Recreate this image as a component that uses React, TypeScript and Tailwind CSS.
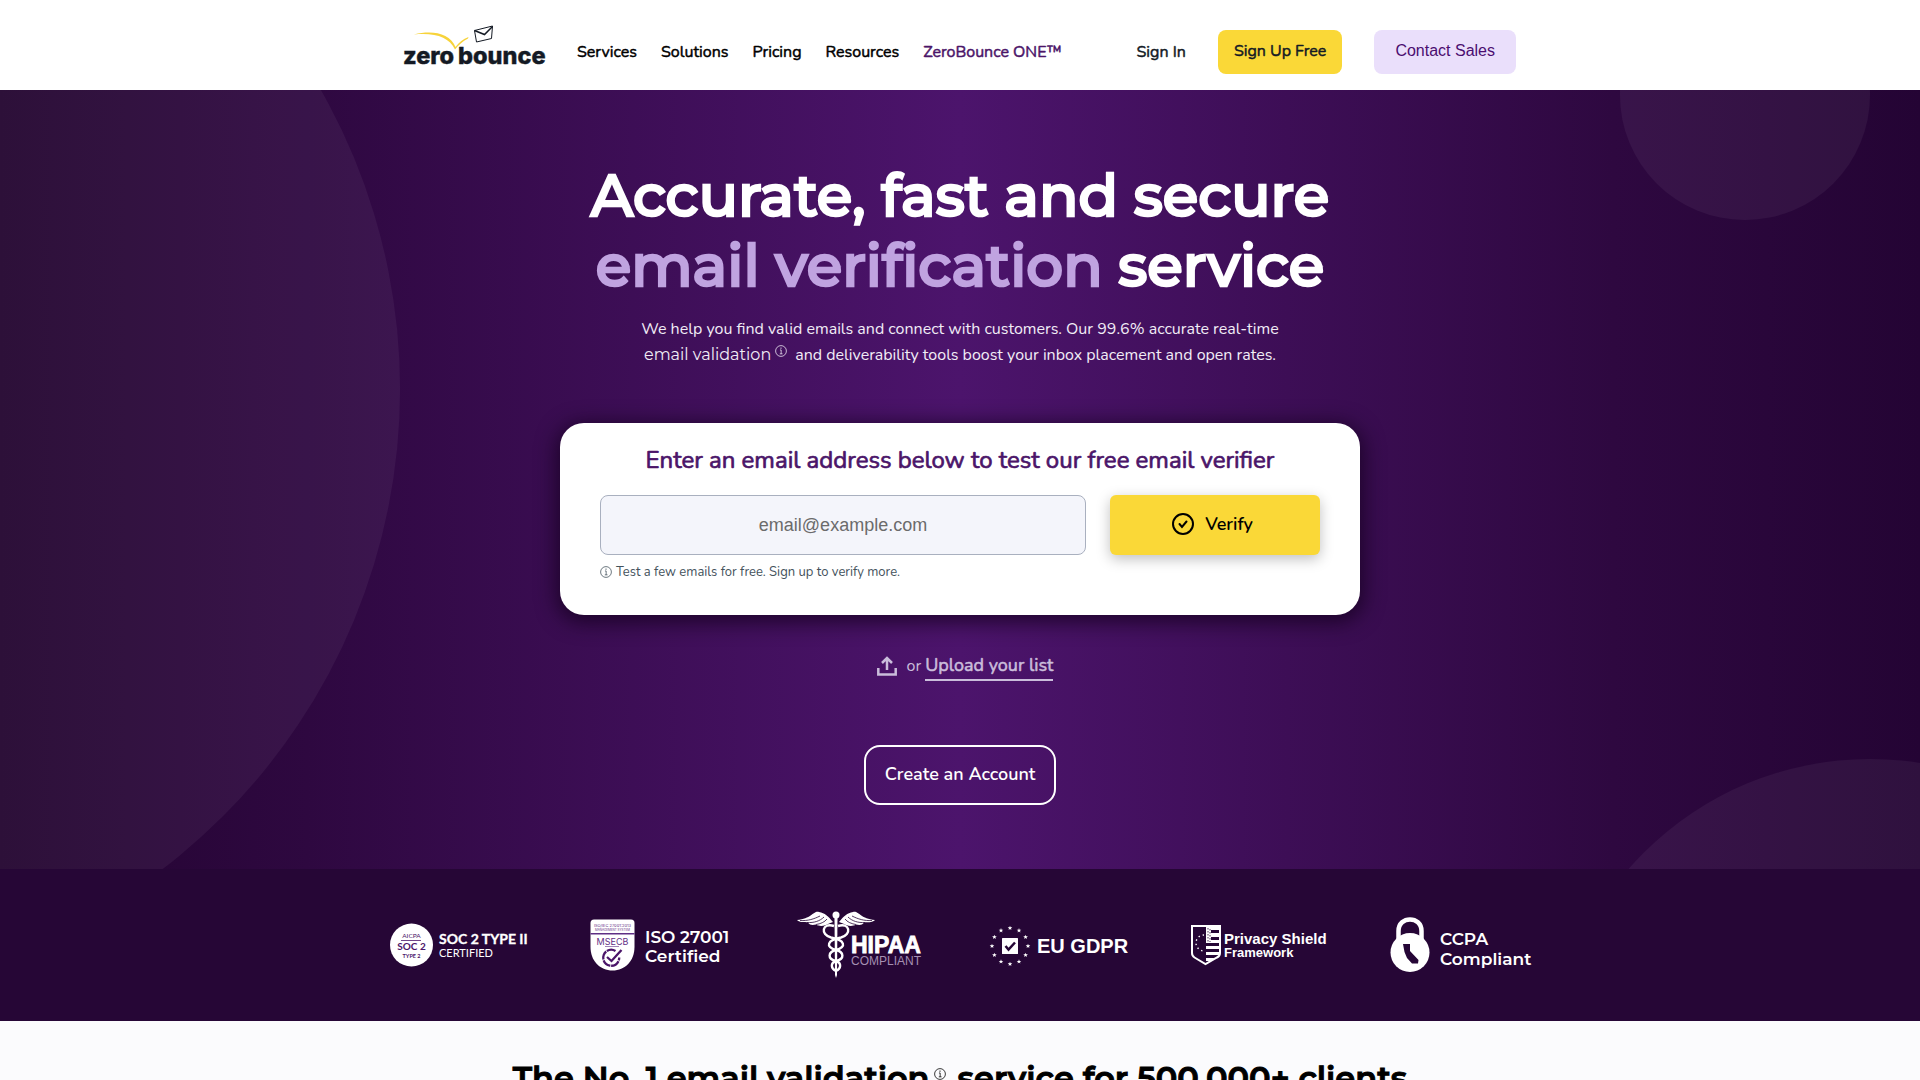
import React from "react";

const body = "font-['Nunito','Open_Sans','Noto_Sans',sans-serif]";
const display = "font-['Montserrat','Inter',sans-serif]";
const heavy = "[-webkit-text-stroke:0.03em_currentColor]";

const navLinks = ["Services", "Solutions", "Pricing", "Resources"];

function Logo() {
  return (
    <svg viewBox="0 0 140 42" className="h-[42px] w-[140px] shrink-0 overflow-visible" role="img" aria-label="zero bounce">
      <path d="M10 9.500C28 5 46 8 51.500 22C55 17.500 59 14 64.500 12L64 13.500C58.500 16.500 54.500 20 51 24.500C45 12 31 7.500 10 9.500Z" fill="#f7d33a" />
      <path d="M70.500 5.500L88.500 1L87.500 13.500L72.500 17Z" fill="none" stroke="#141a24" strokeWidth="1" />
      <path d="M70.500 5.500L80.500 9.500L88.500 1.500" fill="none" stroke="#141a24" strokeWidth="1.500" />
      <text x="-1" y="39" fontFamily="Inter" fontWeight="800" fontSize="23.500" fill="#141a24" stroke="#141a24" strokeWidth=".4">
        zero
        <tspan x="54">bounce</tspan>
      </text>
    </svg>
  );
}

function InfoIcon({ className }: { className: string }) {
  return (
    <svg viewBox="0 0 14 14" className={className} fill="none" stroke="currentColor" aria-hidden="true">
      <circle cx="7" cy="7" r="6.300" strokeWidth=".9" />
      <path d="M5.800 5.800H7.200V10.300M5.600 10.300H8.800" strokeWidth=".9" />
      <circle cx="7" cy="3.600" r=".8" fill="currentColor" stroke="none" />
    </svg>
  );
}

const badge = "h-[72px] w-[140px] shrink-0 overflow-visible";

function SocBadge() {
  return (
    <svg viewBox="0 0 140 72" className={badge} role="img" aria-label="SOC 2 Type II certified" fontFamily="Lato">
      <circle cx="21.500" cy="36" r="21.500" fill="#fff" />
      <g fill="#4b1569" textAnchor="middle">
        <text x="21.500" y="29" fontSize="6.500">AICPA</text>
        <path d="M11 31.500H31" stroke="#4b1569" strokeWidth=".8" />
        <text x="21.500" y="41" fontSize="10" fontWeight="700">SOC 2</text>
        <text x="21.500" y="48.500" fontSize="5.500" fontWeight="700">TYPE 2</text>
      </g>
      <g fill="#fff">
        <text x="49" y="35" fontSize="14" fontWeight="700" stroke="#fff" strokeWidth=".3">SOC 2 TYPE II</text>
        <text x="49" y="48" fontSize="11">CERTIFIED</text>
      </g>
    </svg>
  );
}

function IsoBadge() {
  return (
    <svg viewBox="0 0 140 72" className={badge} role="img" aria-label="ISO 27001 certified">
      <path d="M4 10.500H41Q44.500 10.500 44.500 14V38C44.500 52 35 61.500 22.500 61.500S.5 52 .5 38V14Q.5 10.500 4 10.500Z" fill="#fff" />
      <g fill="#5f2f85" textAnchor="middle" fontFamily="Inter">
        <text x="22.500" y="18" fontSize="4">ISO/IEC 27001:2013</text>
        <text x="22.500" y="22" fontSize="3">MANAGEMENT SYSTEM</text>
        <rect x=".5" y="24" width="44" height="1.500" />
        <text x="22.500" y="35.500" fontSize="9">MSECB</text>
        <rect x="15" y="37" width="14" height=".6" />
      </g>
      <path d="M25.500 42A8 8 0 1 0 29.200 48.500" fill="none" stroke="#4b1569" strokeWidth="2.300" strokeDasharray="9 .8" />
      <path d="M17 48L21.500 52L31.500 41" fill="none" stroke="#4b1569" strokeWidth="2.300" />
      <g fill="#fff" fontFamily="Montserrat, Inter" fontWeight="600" fontSize="17">
        <text x="55" y="34">ISO 27001</text>
        <text x="55" y="53">Certified</text>
      </g>
    </svg>
  );
}

function HipaaBadge() {
  const wing = "M-3 13C-8 7-11 4-17 3C-23 1.500-24 10-39 11C-36 14-31 13-28 13.500C-26 16.500-23 16-20 15.500C-16 18-11 17-7 14.500Z";
  const feathers = "M-36 11.500C-28 12-22 10-16 7M-29 13.500C-22 14-16 12-12 8M-20 15.500C-16 15-11 13-9 10";
  const snake = "M-2 17C-14 13-16 26-5 28.500C9 31 11 38 0 41C-8 43-9 50 0 52C6 54 5 60 0 62";
  return (
    <svg viewBox="0 0 140 72" className={badge} role="img" aria-label="HIPAA compliant">
      <g transform="translate(46 0)">
        <circle cx="0" cy="6" r="3.500" fill="#fff" />
        <path d="M-1.500 9H1.500L1 66L0 69L-1 66Z" fill="#fff" />
        {["scale(1 1)", "scale(-1 1)"].map((t) => (
          <g key={t} transform={t}>
            <path d={wing} fill="#fff" />
            <path d={feathers} fill="none" stroke="#260636" strokeWidth=".8" />
            <path d={snake} fill="none" stroke="#fff" strokeWidth="2.400" />
          </g>
        ))}
      </g>
      <text x="61" y="44" fontFamily="Liberation Sans" fontWeight="700" fontSize="23" fill="#fff" stroke="#fff" strokeWidth=".8">
        HIPAA
      </text>
      <text x="61" y="56" fontFamily="Liberation Sans" fontSize="12" fill="#a58fb3">
        COMPLIANT
      </text>
    </svg>
  );
}

function GdprBadge() {
  const stars = Array.from({ length: 12 }, (_, i) => i * 30);
  return (
    <svg viewBox="0 0 140 72" className={badge} role="img" aria-label="EU GDPR">
      <g transform="translate(20 37)" fill="#fff">
        {stars.map((a) => (
          <path
            key={a}
            transform={`rotate(${a}) translate(0 -18) rotate(${-a})`}
            d="M0-2.300L.6-.7L2.300-.7L1 .4L1.400 2L0 1L-1.400 2L-1 .4L-2.300-.7L-.6-.7Z"
          />
        ))}
        <rect x="-8" y="-8" width="16" height="16" rx=".5" />
        <path d="M-4.500 0L-1.500 3.500L5-3.500" fill="none" stroke="#260636" strokeWidth="2.500" />
      </g>
      <text x="47" y="44" fontFamily="Liberation Sans" fontWeight="700" fontSize="20" fill="#fff">
        EU GDPR
      </text>
    </svg>
  );
}

function PrivacyBadge() {
  return (
    <svg viewBox="0 0 140 72" className={badge} role="img" aria-label="Privacy Shield Framework">
      <path d="M2 17H30V44Q30 47 27 48.500L15.500 55L4.500 48.500Q2 47 2 44Z" fill="none" stroke="#fff" strokeWidth="2" />
      <path d="M16 17H30V21H21V24H30V28H21V31H30V34H16ZM16 37H29V40H16ZM16 43H29V46H16ZM16 49H25L20 52H16Z" fill="#fff" />
      <path d="M18 19V33M20 20V33" stroke="#260636" strokeWidth=".8" strokeDasharray="1.500 1.500" />
      <path d="M14 26A8 8 0 0 0 14 42" fill="none" stroke="#fff" strokeWidth="1.400" strokeDasharray="1.400 3" />
      <g fill="#fff" fontFamily="Liberation Sans" fontWeight="700">
        <text x="34" y="35" fontSize="15">Privacy Shield</text>
        <text x="34" y="48" fontSize="13">Framework</text>
      </g>
    </svg>
  );
}

function CcpaBadge() {
  return (
    <svg viewBox="0 0 140 72" className={badge} role="img" aria-label="CCPA compliant">
      <path d="M8.500 34V22C8.500 6.500 31.500 6.500 31.500 22V34" fill="none" stroke="#fff" strokeWidth="4.500" />
      <circle cx="20" cy="43.500" r="19.500" fill="#fff" />
      <path d="M13 35H20V42L28.500 51L28 54.500H22L17 49L14.500 43Z" fill="#260636" />
      <g fill="#fff" fontFamily="Montserrat, Inter" fontWeight="600" fontSize="17">
        <text x="50" y="36">CCPA</text>
        <text x="50" y="56">Compliant</text>
      </g>
    </svg>
  );
}

export default function App() {
  return (
    <div className={`h-screen overflow-hidden bg-[#fbfbfd] text-base text-black ${body}`}>
      <header className="bg-white px-6">
        <div className="mx-auto flex h-[90px] max-w-[1112px] items-center pt-3.5">
          <a href="#home" className="mr-[33px] mb-3">
            <Logo />
          </a>
          <nav className={`flex items-center gap-6 whitespace-nowrap ${heavy}`} aria-label="Main">
            {navLinks.map((label) => (
              <a key={label} href={`#${label.toLowerCase()}`}>
                {label}
              </a>
            ))}
            <a href="#one" className="text-[#4b1569]">
              ZeroBounce ONE™
            </a>
          </nav>
          <div className="ml-auto flex items-center gap-8 whitespace-nowrap">
            <a href="#signin" className={`text-[#141a24] ${heavy}`}>
              Sign In
            </a>
            <a href="#signup" className={`flex h-11 items-center rounded-lg bg-[#fad837] px-4 pb-0.5 text-[#141a24] ${heavy}`}>
              Sign Up Free
            </a>
            <button type="button" className="h-11 rounded-lg bg-[#eadffb] px-[21px] pb-0.5 font-['Liberation_Sans',sans-serif] text-base text-[#4a0d70]">
              Contact Sales
            </button>
          </div>
        </div>
      </header>

      <main>
        <section className="relative overflow-hidden bg-[linear-gradient(90deg,#22032f_0%,#2e0840_16%,#4c146c_50%,#2e0840_84%,#240434_100%)] px-6 pt-[71px] pb-16">
          <div className="absolute -top-[305px] -left-[808px] size-[1208px] rounded-full bg-white/5" />
          <div className="absolute -top-[120px] right-[50px] size-[250px] rounded-full bg-white/5" />
          <div className="absolute -right-[270px] -bottom-[530px] size-[640px] rounded-full bg-white/5" />
          <div className="relative flex flex-col items-center">
            <h1 className={`text-center text-[58px] leading-[70px] font-medium whitespace-nowrap text-white [-webkit-text-stroke:0.045em_currentColor] ${display}`}>
              Accurate, fast and secure
              <br />
              <span className="text-[#c0a3e0]">email verification</span> service
            </h1>
            <p className="mt-4 text-center leading-[25px] whitespace-nowrap text-[#f1ecf6]">
              We help you find valid emails and connect with customers. Our 99.6% accurate real-time
              <br />
              <a href="#validation" className={`font-normal ${display}`}>
                email validation
                <InfoIcon className="mr-2 mb-2.5 ml-1 inline size-3" />
              </a>
              and deliverability tools boost your inbox placement and open rates.
            </p>

            <form className="mt-[55px] w-full max-w-[800px] rounded-3xl bg-white px-10 pt-5 pb-[33px] shadow-[0_4px_20px_4px_rgba(20,0,30,0.75)]">
              <label htmlFor="email" className={`block text-center text-2xl leading-[34px] text-[#4b1569] ${heavy}`}>
                Enter an email address below to test our free email verifier
              </label>
              <div className="mt-[18px] flex gap-6">
                <input
                  id="email"
                  type="email"
                  placeholder="email@example.com"
                  className="h-[60px] min-w-0 flex-1 rounded-lg border border-[#a9b0bf] bg-[#f4f5fb] text-center font-['Liberation_Sans',sans-serif] text-lg placeholder:text-[#6b6b6b]"
                />
                <button type="button" className="flex h-[60px] w-[210px] items-center justify-center gap-2.5 rounded-md bg-[#fad837] pr-1.5 pb-0.5 text-lg font-semibold shadow-[0_4px_14px_rgba(0,0,0,0.25)]">
                  <svg viewBox="0 0 24 24" className="size-6" fill="none" stroke="currentColor" strokeWidth="2" strokeLinecap="round" aria-hidden="true">
                    <circle cx="12" cy="12" r="10" />
                    <path d="M8.500 12L11 15L15.500 9.500" />
                  </svg>
                  Verify
                </button>
              </div>
              <p className="mt-[7px] flex items-center gap-1 text-[13px] leading-5 text-[#44525c]">
                <InfoIcon className="size-3" />
                Test a few emails for free. Sign up to verify more.
              </p>
            </form>

            <div className="mt-9 flex items-center pl-2.5 text-[#cabddb]">
              <svg viewBox="0 0 20 20" className="mr-2.5 size-5" fill="none" stroke="currentColor" strokeWidth="2.500" aria-hidden="true">
                <path d="M1.300 12V18.500H18.700V12M10 14V2M5 7L10 2L15 7" />
              </svg>
              <span className="mr-1">or</span>
              <a href="#upload" className={`border-b-2 text-lg leading-7 ${heavy}`}>
                Upload your list
              </a>
            </div>

            <a href="#account" className="mt-16 flex h-[60px] w-48 items-center justify-center rounded-2xl border-2 border-white pb-0.5 text-lg font-semibold text-white">
              Create an Account
            </a>
          </div>
        </section>

        <section className="bg-[#260636] px-6 py-10" aria-label="Certifications">
          <div className="mx-auto flex max-w-[1140px] items-center justify-between">
            <SocBadge />
            <IsoBadge />
            <HipaaBadge />
            <GdprBadge />
            <PrivacyBadge />
            <CcpaBadge />
          </div>
        </section>

        <section className="px-6 pt-[37px]">
          <h2 className={`text-center text-[32px] leading-10 font-semibold whitespace-nowrap ${display} ${heavy}`}>
            The No. 1 email validation
            <InfoIcon className="mr-3 mb-3 ml-1 inline size-3" />
            service for 500,000+ clients
          </h2>
        </section>
      </main>
    </div>
  );
}
